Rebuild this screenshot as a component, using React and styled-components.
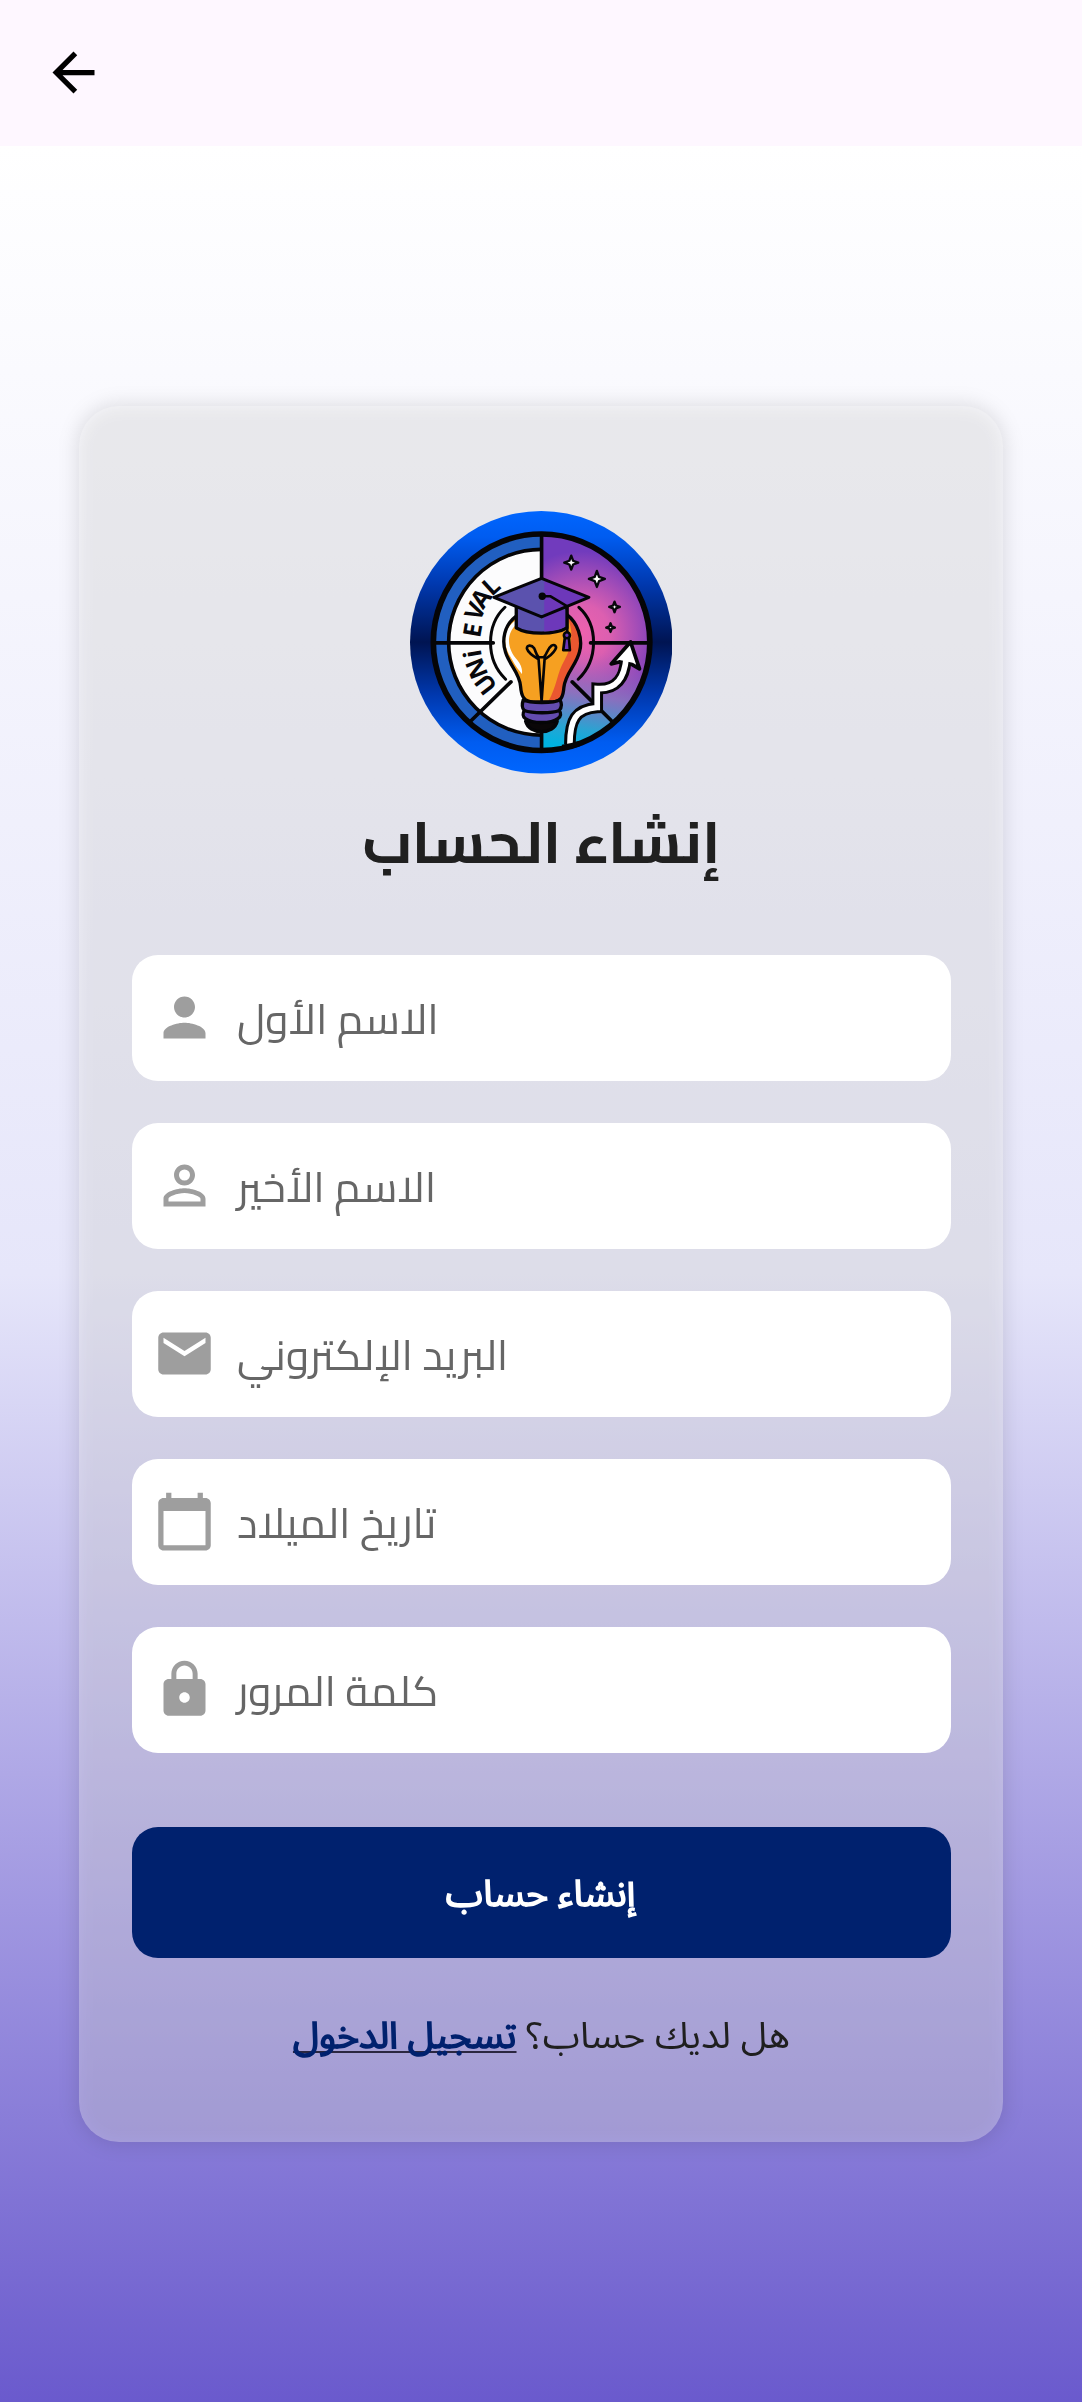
import React from "react";
import styled, { createGlobalStyle } from "styled-components";
import {
  MdArrowBack,
  MdPerson,
  MdPersonOutline,
  MdMail,
  MdCalendarToday,
  MdLock,
} from "react-icons/md";

const GlobalStyle = createGlobalStyle`
  *, *::before, *::after { box-sizing: border-box; }
  body { margin: 0; background: #fef7ff; }
`;

const Screen = styled.div`
  display: flex;
  flex-direction: column;
  width: 1082px;
  height: 2402px;
  overflow: hidden;
`;

const AppBar = styled.header`
  display: flex;
  align-items: center;
  flex: none;
  height: 146px;
  padding: 0 0 1px 42px;
  background: #fef7ff;
`;

const BackButton = styled.button`
  display: flex;
  padding: 0;
  border: 0;
  background: none;
  color: #000;
  font-size: 63px;
`;

const Body = styled.main`
  flex: 1;
  display: flex;
  justify-content: center;
  align-items: center;
  background: linear-gradient(#ffffff, #e6e6fa 50%, #6a5acd);
`;

const Card = styled.section`
  position: relative;
  isolation: isolate;
  width: 924px;
  height: 1736px;
  padding: 105px 52.5px 0;
  display: flex;
  flex-direction: column;
  align-items: center;

  &::before {
    content: "";
    position: absolute;
    z-index: -2;
    inset: -3px;
    border-radius: 43px;
    background: rgba(0, 0, 0, 0.1);
    filter: blur(9px);
  }

  &::after {
    content: "";
    position: absolute;
    z-index: -1;
    inset: 0;
    border-radius: 40px;
    background: rgba(255, 255, 255, 0.3);
  }
`;

const Logo = styled.svg`
  display: block;
  flex: none;
  width: 262.5px;
  height: 262.5px;
`;

const Title = styled.h1`
  margin: 9px 0 0;
  height: 118px;
  font: 700 57.75px/118px Cairo, sans-serif;
  color: #202020;
  transform: scaleX(1.02);
`;

const Form = styled.form`
  width: 100%;
  margin-top: 54px;
  display: flex;
  flex-direction: column;
  gap: 42px;
`;

const Field = styled.label`
  display: flex;
  align-items: center;
  gap: 21px;
  height: 126px;
  padding: 0 21px;
  border-radius: 26px;
  background: #fff;
`;

const FieldIcon = styled.span`
  display: flex;
  color: #9e9e9e;
  font-size: 63px;
`;

const Hint = styled.span`
  font: 400 42px/78px Cairo, sans-serif;
  color: #666;
  padding-top: 2px;
  transform: scaleX(1.013);
  transform-origin: left;
`;

const Submit = styled.button`
  width: 100%;
  height: 131px;
  margin-top: 32px;
  padding: 5px 0 0;
  border: 0;
  border-radius: 26px;
  background: #00216e;
  color: #fff;
  font: 400 36.75px/50px "Noto Sans Arabic", sans-serif;
  -webkit-text-stroke: 1.5px #fff;
`;

const SubmitLabel = styled.span`
  display: inline-block;
  transform: scaleX(1.024);
`;

const Footer = styled.p`
  margin: 51px 0 0;
  font: 400 36.75px/56px "Noto Sans Arabic", sans-serif;
  color: #1f1f1f;
  white-space: nowrap;
  transform: scaleX(1.025);
`;

const Link = styled.a`
  color: #00216e;
  -webkit-text-stroke: 1.5px #00216e;
  text-decoration: underline #2b2740 2px;
  text-underline-offset: 3px;
  text-decoration-skip-ink: none;
`;

const LogoLetter = styled.text`
  font: 700 74px "Noto Sans", sans-serif;
  text-anchor: middle;
  fill: #08080c;
`;

const letters = [
  ["U", -127, 243],
  ["N", -112, 243],
  ["i", -99.5, 243],
  ["E", -80, 243],
  ["V", -65, 233],
  ["A", -54, 228],
  ["L", -42, 226],
];

const sparkles = [
  [512, 188, 21],
  [589, 237, 24],
  [642, 321, 16],
  [630, 383, 13],
];

const star = (x, y, r) => {
  const k = r * 0.27;
  return `M${x} ${y - r}L${x + k} ${y - k}L${x + r} ${y}L${x + k} ${y + k}L${x} ${y + r}L${x - k} ${y + k}L${x - r} ${y}L${x - k} ${y - k}Z`;
};

function UniEvalLogo() {
  return (
    <Logo viewBox="28 33 788 788" role="img" aria-label="UNi EVAL">
      <defs>
        <linearGradient id="ring" x1="0" y1="0" x2="0" y2="1">
          <stop offset="0" stopColor="#0066ff" />
          <stop offset="0.1" stopColor="#005cf0" />
          <stop offset="0.28" stopColor="#0038ae" />
          <stop offset="0.5" stopColor="#001452" />
          <stop offset="0.7" stopColor="#0038ae" />
          <stop offset="0.88" stopColor="#005cf0" />
          <stop offset="1" stopColor="#0066ff" />
        </linearGradient>
        <radialGradient id="glow" gradientUnits="userSpaceOnUse" cx="540" cy="400" r="290">
          <stop offset="0" stopColor="#ee62ae" />
          <stop offset="0.3" stopColor="#dc5fb0" />
          <stop offset="0.62" stopColor="#9e4bb8" />
          <stop offset="0.85" stopColor="#713bbd" />
        </radialGradient>
        <linearGradient id="teal" gradientUnits="userSpaceOnUse" x1="560" y1="450" x2="510" y2="740">
          <stop offset="0" stopColor="#b35fbc" stopOpacity="0" />
          <stop offset="0.45" stopColor="#8a78bf" stopOpacity="0.85" />
          <stop offset="0.8" stopColor="#2ba3d2" />
          <stop offset="1" stopColor="#00b2e0" />
        </linearGradient>
        <clipPath id="rightHalf"><rect x="424" y="90" width="340" height="670" /></clipPath>
        <clipPath id="leftHalf"><rect x="80" y="90" width="344" height="670" /></clipPath>
        <clipPath id="bulbClip">
          <path d="M345 350C312 375 302 420 315 458C328 498 358 520 360 560C362 585 368 606 398 606H456C482 606 488 590 490 562C494 520 528 495 537 455C548 415 530 368 500 345Z" />
        </clipPath>
      </defs>
      <circle cx="422" cy="427" r="394" fill="url(#ring)" />
      <g clipPath="url(#leftHalf)">
        <circle cx="423" cy="427" r="325" fill="#215fc0" />
        <circle cx="423" cy="427" r="279" fill="#fcfcfd" stroke="#050507" strokeWidth="11" />
      </g>
      <g clipPath="url(#rightHalf)">
        <circle cx="423" cy="427" r="325" fill="url(#glow)" />
        <path d="M423 430H748A325 325 0 0 1 423 752Z" fill="url(#teal)" />
      </g>
      <g fill="none" stroke="#050507" strokeWidth="11" strokeLinecap="round">
        <path d="M423 105V240M423 690V748M100 429H278M570 429H745M331 546L212 662M515 546L632 662" />
        <path d="M313 322C256 375 254 480 315 538M535 322C594 375 594 480 533 538" strokeWidth="9" />
      </g>
      <circle cx="423" cy="427" r="325" fill="none" stroke="#050507" strokeWidth="17" />
      {letters.map(([ch, angle, y]) => (
        <LogoLetter key={ch} transform={`rotate(${angle} 423 427)`} x="423" y={y}>{ch}</LogoLetter>
      ))}
      {sparkles.map(([x, y, r]) => (
        <path key={x} d={star(x, y, r)} fill="#fff" stroke="#08080c" strokeWidth="7" strokeLinejoin="round" />
      ))}
      <g clipPath="url(#bulbClip)">
        <rect x="300" y="330" width="250" height="290" fill="#f6a021" />
        <path d="M500 350C520 395 515 440 492 480C468 520 470 560 440 610H560V340Z" fill="#ea5730" />
        <path d="M349 372C310 405 325 455 350 480C362 495 366 508 364 522C344 500 336 480 325 464C306 425 310 385 345 362Z" fill="#fff" />
      </g>
      <g fill="none" stroke="#050507" strokeWidth="10" strokeLinecap="round" strokeLinejoin="round">
        <path d="M345 350C312 375 302 420 315 458C328 498 358 520 360 560C362 585 368 606 398 606H456C482 606 488 590 490 562C494 520 528 495 537 455C548 415 530 368 500 345" />
        <path d="M423 604L414 478C400 470 382 456 379 446C378 435 393 434 400 444C405 452 406 464 414 472H430C440 462 440 446 453 437C463 432 470 440 464 449C456 463 444 471 432 478L423 604" strokeWidth="8" />
        <path d="M375 664C385 706 461 706 470 664Z" fill="#0a0708" />
        <path d="M368 600C364 612 364 625 371 632C366 640 366 650 374 656C395 672 452 672 472 656C482 650 482 640 476 632C484 622 484 610 478 600C460 611 388 611 368 600Z" fill="#644cb0" />
        <path d="M371 632C395 641 455 641 476 632" />
        <path d="M347 320V384C380 405 465 405 499 384V320Z" fill="#5b52ae" />
      </g>
      <path d="M431 330H494V380C478 390 450 394 431 395Z" fill="#6d38ba" />
      <path d="M280 292L423 235L565 292L423 351Z" fill="#5b52ae" />
      <path d="M431 238L565 292L431 348Z" fill="#6d38ba" />
      <g fill="none" stroke="#050507" strokeWidth="9" strokeLinecap="round" strokeLinejoin="round">
        <path d="M280 292L423 235L565 292L423 351Z" />
        <path d="M425 289H450L500 319V400" strokeWidth="8" />
        <path d="M493 412L488 451H508L505 412Z" fill="#6d38ba" strokeWidth="8" />
        <circle cx="499" cy="406" r="9" fill="#6d38ba" strokeWidth="8" />
      </g>
      <circle cx="425" cy="289" r="11" fill="#050507" />
      <g fill="none">
        <path d="M508 733C508 660 525 628 590 623V566C650 570 672 530 675 486" stroke="#050507" strokeWidth="35" />
        <path d="M690 426L632 492L656 486L695 494L717 507Z" fill="#fff" stroke="#050507" strokeWidth="11" strokeLinejoin="round" />
        <path d="M508 735C508 660 525 628 590 623V566C650 570 672 530 677 474" stroke="#fff" strokeWidth="17" />
      </g>
      <path d="M485 743A325 325 0 0 0 535 732" fill="none" stroke="#050507" strokeWidth="17" />
    </Logo>
  );
}

const fields = [
  { hint: "الاسم الأول", Icon: MdPerson },
  { hint: "الاسم الأخير", Icon: MdPersonOutline },
  { hint: "البريد الإلكتروني", Icon: MdMail },
  { hint: "تاريخ الميلاد", Icon: MdCalendarToday },
  { hint: "كلمة المرور", Icon: MdLock },
];

export default function App() {
  return (
    <Screen>
      <GlobalStyle />
      <AppBar>
        <BackButton type="button" aria-label="رجوع"><MdArrowBack /></BackButton>
      </AppBar>
      <Body>
        <Card>
          <UniEvalLogo />
          <Title dir="rtl">إنشاء الحساب</Title>
          <Form>
            {fields.map(({ hint, Icon }) => (
              <Field key={hint}>
                <FieldIcon><Icon /></FieldIcon>
                <Hint dir="rtl">{hint}</Hint>
              </Field>
            ))}
            <Submit type="button" dir="rtl"><SubmitLabel>إنشاء حساب</SubmitLabel></Submit>
          </Form>
          <Footer dir="rtl">هل لديك حساب؟ <Link>تسجيل الدخول</Link></Footer>
        </Card>
      </Body>
    </Screen>
  );
}
